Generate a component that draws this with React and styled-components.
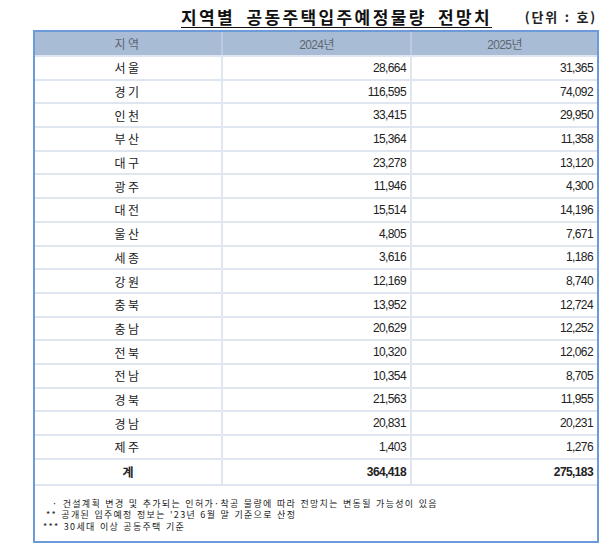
import React from "react";
import styled, { createGlobalStyle } from "styled-components";

const Global = createGlobalStyle`
  html, body { margin: 0; padding: 0; background: #fff; }
  body { font-family: "Noto Sans CJK KR", "Liberation Sans", sans-serif; color: #222; }
`;

const Page = styled.div`
  width: 610px;
  height: 555px;
  box-sizing: border-box;
`;

const Top = styled.div`
  display: flex;
  align-items: center;
  height: 30px;
  padding-left: 181px;
  padding-right: 13px;
  box-sizing: border-box;
`;

const Title = styled.h1`
  margin: 4px 0 0;
  font-size: 17px;
  font-weight: 700;
  line-height: 19px;
  letter-spacing: 2.4px;
  word-spacing: 5px;
  color: #111;
  border-bottom: 1px solid #111;
  padding-bottom: 1px;
`;

const Unit = styled.span`
  margin-left: auto;
  margin-top: 2px;
  font-size: 13px;
  font-weight: 700;
  letter-spacing: 1.8px;
  word-spacing: 1px;
  color: #222;
`;

const Table = styled.div`
  margin-left: 33px;
  width: 566px;
  box-sizing: border-box;
  border: 2px solid #6b9bd9;
`;

const Grid = styled.div`
  display: grid;
  grid-template-columns: 186px 189px 1fr;
  height: ${(p) => p.$h}px;
  box-sizing: border-box;
  background: ${(p) => (p.$head ? "#a9bcd6" : "#fff")};
  border-top: ${(p) => (p.$first ? "none" : "2px solid #dfe6f0")};
`;

const Cell = styled.div`
  display: flex;
  align-items: center;
  justify-content: ${(p) => (p.$num ? "flex-end" : "center")};
  padding-right: ${(p) => (p.$num ? "4px" : "0")};
  border-left: ${(p) => (p.$lead ? "none" : "2px solid")};
  border-left-color: ${(p) => (p.$head ? "#bccbe0" : "#dfe6f0")};
  font-family: ${(p) =>
    p.$num || p.$year
      ? '"Liberation Sans", Arial, "Noto Sans CJK KR", sans-serif'
      : '"Noto Sans CJK KR", sans-serif'};
  font-size: 12px;
  letter-spacing: ${(p) =>
    p.$num || p.$year ? "-0.6px" : p.$total ? "0" : "2.5px"};
  font-weight: ${(p) => (p.$total ? 700 : 400)};
  color: ${(p) => (p.$head ? "#5e6670" : "#222")};
`;

const Notes = styled.div`
  height: 57px;
  box-sizing: border-box;
  border-top: 2px solid #dfe6f0;
  padding: 12px 0 0 8px;
  font-size: 9px;
  line-height: 12px;
  letter-spacing: 1.3px;
  word-spacing: 1px;
  color: #222;
`;

const Note = styled.div`
  padding-left: ${(p) => p.$indent}px;
  white-space: nowrap;
  height: 11.5px;
`;

const rows = [
  ["서울", "28,664", "31,365"],
  ["경기", "116,595", "74,092"],
  ["인천", "33,415", "29,950"],
  ["부산", "15,364", "11,358"],
  ["대구", "23,278", "13,120"],
  ["광주", "11,946", "4,300"],
  ["대전", "15,514", "14,196"],
  ["울산", "4,805", "7,671"],
  ["세종", "3,616", "1,186"],
  ["강원", "12,169", "8,740"],
  ["충북", "13,952", "12,724"],
  ["충남", "20,629", "12,252"],
  ["전북", "10,320", "12,062"],
  ["전남", "10,354", "8,705"],
  ["경북", "21,563", "11,955"],
  ["경남", "20,831", "20,231"],
  ["제주", "1,403", "1,276"],
];

export default function App() {
  return (
    <Page>
      <Global />
      <Top>
        <Title>지역별 공동주택입주예정물량 전망치</Title>
        <Unit>(단위 : 호)</Unit>
      </Top>
      <Table>
        <Grid $head $first $h={23}>
          <Cell $lead $head>지역</Cell>
          <Cell $head $year>2024년</Cell>
          <Cell $head $year>2025년</Cell>
        </Grid>
        {rows.map(([r, a, b]) => (
          <Grid key={r} $h={23.7}>
            <Cell $lead>{r}</Cell>
            <Cell $num>{a}</Cell>
            <Cell $num>{b}</Cell>
          </Grid>
        ))}
        <Grid $h={26}>
          <Cell $lead $total>계</Cell>
          <Cell $num $total>364,418</Cell>
          <Cell $num $total>275,183</Cell>
        </Grid>
        <Notes>
          <Note $indent={9}>· 건설계획 변경 및 추가되는 인허가·착공 물량에 따라 전망치는 변동될 가능성이 있음</Note>
          <Note $indent={3}>** 공개된 입주예정 정보는 '23년 6월 말 기준으로 산정</Note>
          <Note $indent={0}>*** 30세대 이상 공동주택 기준</Note>
        </Notes>
      </Table>
    </Page>
  );
}
